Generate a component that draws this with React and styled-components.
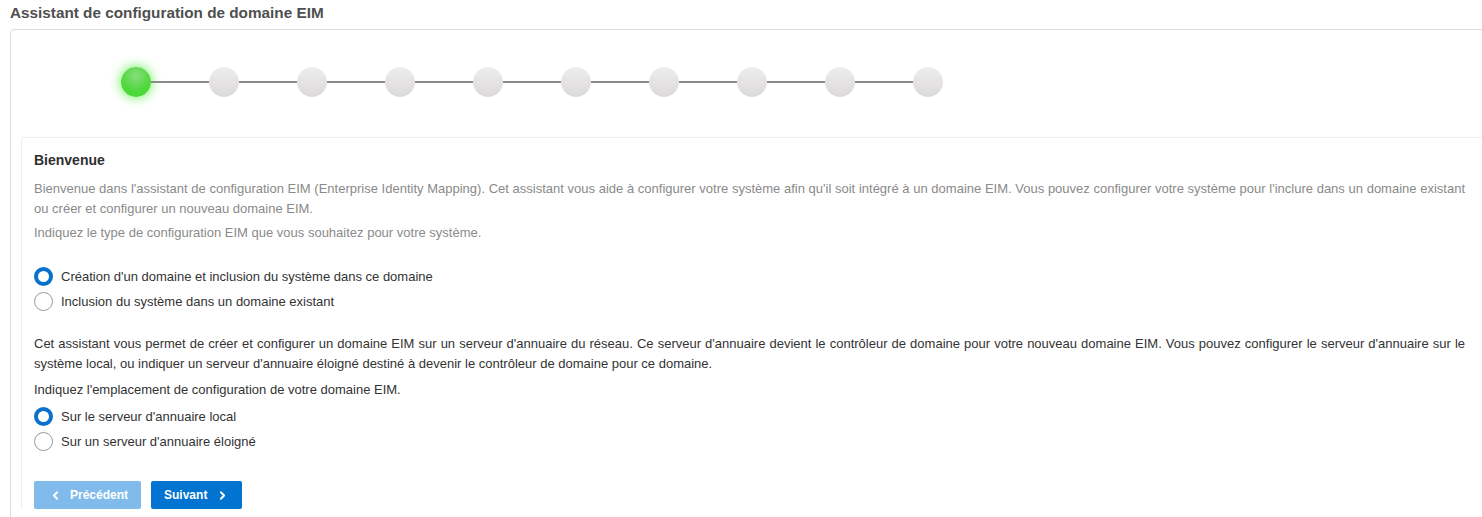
import React, { useState } from "react";
import styled, { createGlobalStyle } from "styled-components";
import { ChevronLeft, ChevronRight } from "lucide-react";

const Global = createGlobalStyle`
  html, body { margin: 0; padding: 0; background: #fff; overflow: hidden; }
  body { font-family: "Liberation Sans", Arial, sans-serif; }
  * { box-sizing: border-box; }
`;

const Page = styled.div`
  padding: 4px 0 0 10px;
  width: 1482px;
`;

const Title = styled.h1`
  margin: 0 0 7px 0;
  font-size: 15.3px;
  line-height: 18px;
  font-weight: bold;
  color: #4f4f4f;
`;

const Card = styled.div`
  width: 1490px;
  border: 1px solid #dcdcdc;
  border-radius: 4px;
  padding: 0 10px;
  height: 500px;
`;

const Stepper = styled.div`
  display: flex;
  align-items: center;
  padding: 37px 0 40px 100px;
`;

const Dot = styled.div`
  width: 30px;
  height: 30px;
  border-radius: 50%;
  flex: none;
  background: ${(p) =>
    p.$active
      ? "radial-gradient(circle at 50% 30%, #86dd7c 0%, #52d83f 55%, #3edc2a 100%)"
      : "linear-gradient(to bottom, #ededed 0%, #e3e1e1 60%, #dad8d8 100%)"};
  box-shadow: ${(p) =>
    p.$active ? "0 0 8px 3px rgba(90, 240, 70, 0.55)" : "none"};
`;

const Connector = styled.div`
  width: 58px;
  height: 2px;
  background: #8a8a8a;
  flex: none;
`;

const Panel = styled.div`
  border-top: 1px solid #efefef;
  border-left: 1px solid #efefef;
  border-top-left-radius: 4px;
  padding: 14px 24px 0 12px;
`;

const Heading = styled.h2`
  margin: 0 0 10px 0;
  font-size: 14px;
  line-height: 17px;
  font-weight: bold;
  color: #2e2e2e;
`;

const Text = styled.p`
  margin: 0 0 ${(p) => p.$mb ?? 4}px 0;
  font-size: 13px;
  line-height: 20px;
  text-align: justify;
  color: ${(p) => (p.$muted ? "#8a8a8a" : "#333")};
`;

const RadioGroup = styled.div`
  display: flex;
  flex-direction: column;
  margin: ${(p) => p.$mt}px 0 ${(p) => p.$mb}px 0;
`;

const RadioRow = styled.label`
  display: flex;
  align-items: center;
  height: 25px;
  cursor: pointer;
  font-size: 13px;
  color: #333;
`;

const RadioCircle = styled.span`
  width: 19px;
  height: 19px;
  border-radius: 50%;
  flex: none;
  background: #fff;
  border: ${(p) => (p.$checked ? "4px solid #0a72cc" : "1px solid #9a9a9a")};
  margin-right: 8px;
`;

const Buttons = styled.div`
  display: flex;
  gap: 10px;
`;

const Button = styled.button`
  display: flex;
  align-items: center;
  height: 28px;
  border: none;
  border-radius: 2px;
  font-family: "Liberation Sans", Arial, sans-serif;
  font-size: 12px;
  font-weight: bold;
  color: #fff;
  background: ${(p) => (p.$disabled ? "#80bbec" : "#0074d0")};
  padding: ${(p) => p.$pad};
  gap: ${(p) => p.$gap}px;
  cursor: ${(p) => (p.$disabled ? "default" : "pointer")};
`;

function Radio({ checked, label, onClick }) {
  return (
    <RadioRow onClick={onClick}>
      <RadioCircle $checked={checked} />
      {label}
    </RadioRow>
  );
}

export default function App() {
  const [type, setType] = useState(0);
  const [loc, setLoc] = useState(0);
  const steps = Array.from({ length: 10 });
  return (
    <>
      <Global />
      <Page>
        <Title>Assistant de configuration de domaine EIM</Title>
        <Card>
          <Stepper>
            {steps.map((_, i) => (
              <React.Fragment key={i}>
                {i > 0 && <Connector />}
                <Dot $active={i === 0} />
              </React.Fragment>
            ))}
          </Stepper>
          <Panel>
            <Heading>Bienvenue</Heading>
            <Text $muted>
              Bienvenue dans l'assistant de configuration EIM (Enterprise Identity Mapping). Cet assistant vous aide à configurer votre système afin qu'il soit intégré à un domaine EIM. Vous pouvez configurer votre système pour l'inclure dans un domaine existant ou créer et configurer un nouveau domaine EIM.
            </Text>
            <Text $muted>
              Indiquez le type de configuration EIM que vous souhaitez pour votre système.
            </Text>
            <RadioGroup $mt={21} $mb={20}>
              <Radio
                checked={type === 0}
                onClick={() => setType(0)}
                label="Création d'un domaine et inclusion du système dans ce domaine"
              />
              <Radio
                checked={type === 1}
                onClick={() => setType(1)}
                label="Inclusion du système dans un domaine existant"
              />
            </RadioGroup>
            <Text $mb={6}>
              Cet assistant vous permet de créer et configurer un domaine EIM sur un serveur d'annuaire du réseau. Ce serveur d'annuaire devient le contrôleur de domaine pour votre nouveau domaine EIM. Vous pouvez configurer le serveur d'annuaire sur le système local, ou indiquer un serveur d'annuaire éloigné destiné à devenir le contrôleur de domaine pour ce domaine.
            </Text>
            <Text>Indiquez l'emplacement de configuration de votre domaine EIM.</Text>
            <RadioGroup $mt={0} $mb={27}>
              <Radio
                checked={loc === 0}
                onClick={() => setLoc(0)}
                label="Sur le serveur d'annuaire local"
              />
              <Radio
                checked={loc === 1}
                onClick={() => setLoc(1)}
                label="Sur un serveur d'annuaire éloigné"
              />
            </RadioGroup>
            <Buttons>
              <Button $disabled $pad="0 13px 0 15px" $gap={8}>
                <ChevronLeft size={13} strokeWidth={3.5} />
                Précédent
              </Button>
              <Button $pad="0 13px 0 13px" $gap={9}>
                Suivant
                <ChevronRight size={13} strokeWidth={3.5} />
              </Button>
            </Buttons>
          </Panel>
        </Card>
      </Page>
    </>
  );
}
